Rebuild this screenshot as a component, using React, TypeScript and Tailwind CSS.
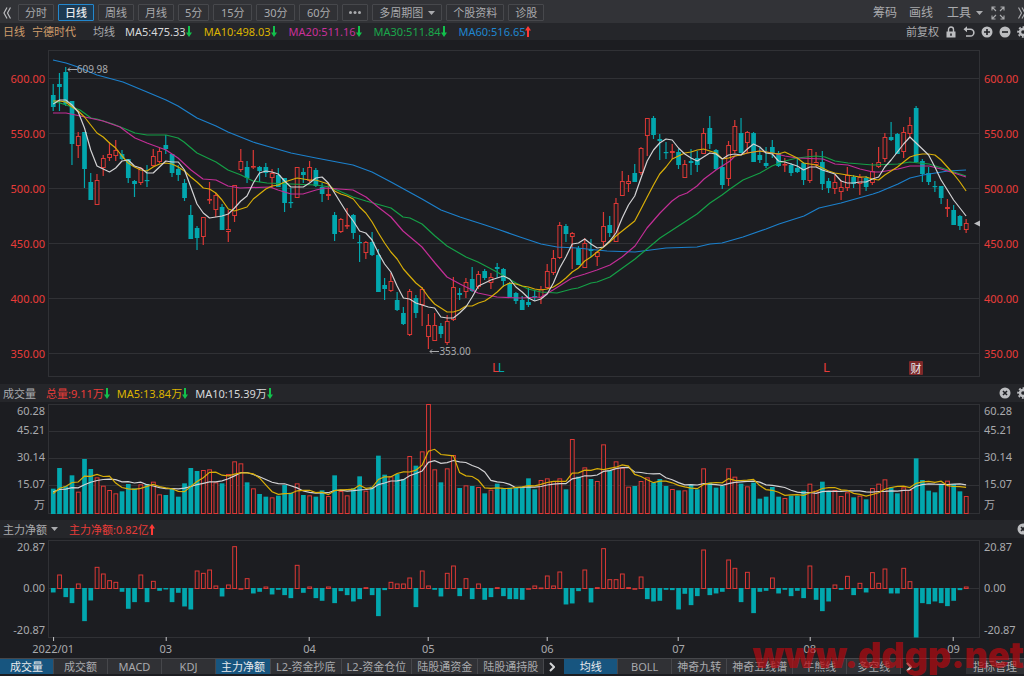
import React from "react";

const STEP = 6.253;
const FIRST = 5.2;
const PLOT_W = 932;
const PRICE_TOP = 50;
const xAt = (i: number) => FIRST + STEP * i;
const leftPct = (x: number) => ({ left: `${(x / PLOT_W) * 100}%` });

const RED = "#dc3835";
const TEAL = "#02a7ae";
const YELLOW = "#d8ae08";
const WHITE = "#d2d2d4";
const GRID = "#303135";

// direction, high, body top, body bottom, low
const CANDLES = `d 84 95 107 111|d 73 84 87 111|d 67 72 104 106|d 101 101 144 165|u 132 136 146 158|d 132 132 169 188|d 173 182 200 200|u 174 180 205 205|u 155 158 168 176|u 142 154 158 161|u 140 150 156 161|d 150 154 159 160|d 159 159 178 183|d 180 181 184 197|u 167 168 183 185|d 165 180 181 187|u 149 156 166 167|u 148 151 162 163|d 135 145 149 154|d 154 154 173 177|d 165 169 175 181|d 179 183 198 201|d 205 215 239 239|d 226 228 238 250|u 217 217 237 245|u 182 199 200 204|u 193 195 210 217|d 204 207 230 230|u 210 229 232 242|u 185 185 216 222|u 149 161 170 172|d 161 167 178 183|u 150 166 167 169|d 166 167 171 182|d 163 167 173 177|u 169 173 178 188|d 168 175 187 187|d 178 178 203 212|d 188 202 203 208|u 167 167 198 198|d 168 172 175 183|u 161 167 181 182|d 168 170 186 187|d 183 187 194 202|u 184 194 196 200|d 212 215 234 241|u 218 219 232 233|u 208 225 226 229|d 214 215 233 239|d 235 242 243 262|u 241 242 253 259|d 232 242 255 256|d 249 255 292 292|d 278 285 289 300|u 273 281 291 292|d 292 300 310 311|d 307 313 324 325|u 289 291 335 336|d 295 298 313 318|u 287 289 305 326|u 314 325 337 349|u 313 325 341 341|d 323 326 334 338|u 315 321 343 345|u 277 287 320 321|d 288 293 295 300|u 278 282 292 298|d 267 279 291 292|u 271 274 287 289|d 269 271 278 280|u 273 277 283 289|d 263 267 269 278|d 268 269 281 287|d 282 283 297 297|d 292 293 301 304|d 296 300 310 310|d 288 302 305 307|d 290 296 297 301|u 286 289 298 304|u 264 271 288 289|u 250 258 273 275|u 222 225 258 259|d 224 226 234 242|u 232 233 237 269|d 246 248 265 265|u 238 243 268 268|d 239 249 251 257|u 251 252 257 266|u 212 226 242 246|d 216 225 233 237|u 198 203 242 242|u 171 181 196 196|u 175 181 184 192|d 164 173 182 182|u 147 148 173 175|u 118 118 136 156|d 116 118 135 139|d 134 139 141 160|d 142 152 153 159|u 144 151 153 159|d 149 152 165 169|u 160 164 178 178|d 149 161 163 175|d 151 158 165 172|u 128 133 154 154|d 116 128 144 149|d 149 150 169 170|d 160 167 185 189|u 141 145 179 186|u 120 126 151 153|d 118 133 153 153|u 131 132 143 153|d 132 133 162 162|d 148 155 160 163|d 147 163 166 168|d 140 147 154 158|d 151 153 166 167|u 158 164 165 172|d 163 165 173 176|d 158 168 172 173|d 162 163 180 185|u 149 149 181 183|u 152 162 165 167|d 151 162 184 190|d 178 181 188 193|u 175 182 189 194|u 180 187 192 200|u 167 175 188 191|d 175 177 184 188|u 174 177 184 195|d 176 178 187 191|u 163 171 183 185|u 147 162 167 168|u 133 137 159 162|d 122 137 140 141|d 133 134 154 154|u 127 132 152 158|u 117 125 134 138|d 106 108 162 163|d 159 161 174 182|d 167 173 182 185|d 181 186 187 192|d 186 186 198 204|u 199 207 209 217|d 205 210 225 225|d 215 216 226 230|u 219 223 230 233`
  .split("|")
  .map((row) => {
    const [dir, ...v] = row.split(" ");
    const [high, top, bottom, low] = v.map(Number);
    return { up: dir === "u", high, top, bottom, low };
  });

const MA5 = [104, 100, 100, 105, 112, 128, 150, 166, 169, 172, 168, 161, 160, 166, 168, 173, 173, 167, 161, 162, 162, 170, 187, 204, 213, 218, 217, 216, 214, 208, 201, 196, 183, 173, 171, 172, 174, 181, 187, 187, 187, 183, 178, 177, 183, 193, 203, 213, 221, 231, 233, 240, 253, 264, 272, 286, 298, 299, 303, 305, 307, 308, 317, 318, 318, 313, 307, 297, 286, 283, 280, 278, 276, 279, 287, 292, 298, 301, 299, 294, 283, 268, 257, 244, 243, 239, 244, 248, 247, 241, 233, 218, 205, 196, 178, 161, 150, 143, 139, 140, 148, 154, 158, 161, 157, 153, 154, 159, 155, 154, 155, 149, 144, 147, 153, 154, 161, 162, 164, 166, 170, 167, 167, 170, 172, 174, 181, 183, 183, 182, 182, 179, 177, 167, 160, 152, 144, 137, 143, 149, 155, 167, 180, 190, 200, 208, 216];
const MA10 = [101, 101, 102, 107, 111, 117, 125, 133, 137, 143, 148, 156, 163, 167, 170, 171, 167, 164, 163, 164, 167, 171, 177, 182, 188, 189, 193, 200, 209, 211, 209, 207, 199, 194, 189, 186, 185, 182, 180, 178, 179, 180, 180, 182, 184, 191, 194, 196, 199, 207, 213, 222, 233, 243, 252, 259, 269, 276, 283, 288, 297, 304, 308, 312, 312, 310, 306, 306, 303, 301, 297, 292, 286, 283, 284, 286, 287, 289, 290, 289, 287, 283, 278, 272, 268, 261, 257, 252, 247, 242, 236, 231, 226, 221, 209, 197, 185, 174, 167, 159, 156, 153, 152, 150, 149, 151, 153, 159, 158, 156, 155, 153, 152, 151, 152, 153, 154, 152, 155, 158, 163, 164, 165, 168, 171, 173, 174, 175, 176, 177, 177, 179, 180, 175, 171, 167, 162, 157, 155, 154, 154, 155, 160, 167, 174, 182, 191];
const MA20 = "53,113 66,113 85,117 103,121 120,127 128,133 135,138 147,143 166,150 178,158 191,170 203,179 216,180 228,186 240,188 270,187 278,190 291,194 303,194 316,190 325,188 353,190 366,197 378,207 391,217 403,231 422,247 435,263 447,277 460,284 478,293 497,297 520,298 541,297 553,290 572,278 585,274 597,270 610,265 622,257 635,246 647,228 660,213 672,201 679,196 687,193 697,186 704,179 716,170 730,161 735,156 747,153 760,151 772,153 785,156 797,158 823,159 835,164 848,165 860,169 873,172 880,172 898,169 910,166 929,166 941,169 954,173 966,177";
const MA30 = "53,102 60,103 72,107 80,110 91,118 97,119 113,124 128,130 135,133 147,135 166,135 178,138 184,142 197,153 216,162 228,170 241,175 253,181 267,183 291,184 316,185 330,187 353,197 366,201 391,208 403,217 410,218 422,224 435,236 447,246 466,257 478,262 497,272 516,283 528,289 541,292 557,293 572,289 578,288 591,283 597,282 610,277 635,259 660,238 680,225 697,214 710,203 722,195 730,189 743,180 760,173 772,166 785,161 797,158 816,156 825,157 835,161 848,163 873,165 898,164 910,162 929,164 948,170 966,176";
const MA60 = "53,60 66,63 78,67 97,75 123,82 147,92 166,100 178,106 197,118 216,126 228,132 253,142 270,147 291,153 316,158 337,162 353,165 372,172 391,182 422,199 441,210 460,217 485,225 500,230 520,237 541,244 557,247 577,248 607,251 635,252 666,248 697,247 710,244 722,243 743,237 766,229 779,224 804,216 819,208 841,203 873,194 879,192 898,184 910,178 923,175 948,171 966,170";

// thirds of a unit measured down from the top of the volume panel
const VOLUME = [326, 264, 319, 286, 335, 237, 267, 292, 317, 330, 340, 334, 312, 325, 313, 312, 305, 343, 345, 327, 350, 310, 264, 273, 270, 268, 307, 310, 282, 244, 250, 307, 325, 342, 350, 352, 347, 315, 338, 310, 345, 346, 350, 331, 348, 286, 333, 346, 325, 289, 332, 320, 227, 284, 289, 282, 297, 228, 257, 214, 72, 268, 307, 265, 225, 324, 316, 318, 321, 340, 329, 311, 325, 323, 323, 320, 295, 328, 300, 295, 303, 295, 328, 177, 290, 262, 297, 303, 193, 271, 244, 263, 320, 318, 303, 292, 308, 297, 318, 327, 331, 331, 314, 328, 265, 308, 323, 318, 265, 290, 311, 319, 308, 356, 350, 321, 350, 354, 347, 347, 332, 311, 332, 305, 334, 330, 348, 337, 352, 347, 358, 324, 311, 298, 322, 340, 322, 330, 235, 300, 332, 337, 314, 302, 312, 334, 348].map((v) => (v - 72) / 3);
const EARLIER = [330, 330, 330, 330, 330, 343, 345, 345, 343].map((v) => (v - 72) / 3);

// net inflow, in thirds of a unit
const FLOW = [-11, 42, -25, -43, 15, -97, -35, 65, 45, 25, 20, -9, -60, -40, 42, -40, 23, -6, -2, -40, -12, -53, -62, 54, 47, 57, 9, -23, 12, 127, 1, 31, -14, -9, 6, -17, -3, -19, -28, 71, -12, 6, -28, -36, 6, -43, -7, -19, -38, -31, 4, -19, -82, -4, 20, 15, 15, 33, -55, 54, 9, -3, -23, 47, 69, -22, 31, -31, 15, -33, -25, 4, -22, -31, -31, -33, 1, 9, 3, 39, 9, 51, -47, -44, -7, 57, -41, 4, 121, 28, 28, 45, 4, 1, 36, -31, -38, -36, -3, -4, -62, -15, -49, -22, 117, -19, -14, -9, 87, 62, -40, 50, -73, -9, -6, 33, -14, -3, -22, -6, -28, 69, -33, -67, -38, 12, -3, 38, -19, 17, -11, 49, 17, 60, -14, -14, 62, 22, -146, -43, -46, -38, -43, -52, -36, -4, 6].map((v) => v / 3);

const MONTHS: [string, number][] = [["2022/01", 0], ["03", 18], ["04", 41], ["05", 60], ["06", 79], ["07", 100], ["08", 121], ["09", 144]];

const line = (ys: number[]) => ys.map((y, i) => `${xAt(i).toFixed(1)},${y.toFixed(1)}`).join(" ");
const average = (n: number) => {
  const all = [...EARLIER, ...VOLUME];
  return VOLUME.map((_, i) => all.slice(i + 10 - n, i + 10).reduce((a, b) => a + b, 0) / n);
};

function Bar({ x, y, h, up }: { x: number; y: number; h: number; up: boolean }) {
  return up ? (
    <rect x={x - 1.8} y={y + 0.5} width={3.8} height={Math.max(h - 1, 0.6)} fill="#1c1d21" stroke={RED} />
  ) : (
    <rect x={x - 2.3} y={y} width={4.7} height={Math.max(h, 1.2)} fill={TEAL} />
  );
}

function Plot({ height, rules, children }: { height: number; rules: number[]; children: React.ReactNode }) {
  return (
    <svg viewBox={`0 0 ${PLOT_W} ${height}`} height={height} preserveAspectRatio="none" className="block w-full" aria-hidden="true">
      {rules.map((y) => (
        <line key={y} x1="0" x2={PLOT_W} y1={y + 0.5} y2={y + 0.5} stroke={GRID} />
      ))}
      <rect x="0.5" y="0.5" width={PLOT_W - 1} height={height - 1} fill="none" stroke={GRID} />
      {children}
    </svg>
  );
}

function Trend({ up = false }: { up?: boolean }) {
  return (
    <svg width="6" height="11" viewBox="0 0 6 11" className={up ? "shrink-0 text-[#ff3a36]" : "shrink-0 rotate-180 text-[#12c04c]"} aria-hidden="true">
      <path d="M3 0 6 4.500H4V11H2V4.500H0Z" fill="currentColor" />
    </svg>
  );
}

function Stat({ text, color, up }: { text: string; color: string; up?: boolean }) {
  return (
    <span className={`flex items-center ${color}`}>
      {text}
      <Trend up={up} />
    </span>
  );
}

function Caret() {
  return (
    <svg width="7" height="4" viewBox="0 0 7 4" className="shrink-0" aria-hidden="true">
      <path d="M0 0H7L3.500 4Z" fill="currentColor" />
    </svg>
  );
}

function Gear() {
  return (
    <svg width="12" height="12" viewBox="0 0 12 12" className="shrink-0" aria-hidden="true">
      <g fill="none" stroke="currentColor">
        <circle cx="6" cy="6" r="3" strokeWidth="2.4" />
        <circle cx="6" cy="6" r="4.9" strokeWidth="1.8" strokeDasharray="1.95 1.9" strokeDashoffset="1" />
      </g>
    </svg>
  );
}

function Disc({ d }: { d: string }) {
  return (
    <svg width="12" height="12" viewBox="0 0 12 12" className="shrink-0" aria-hidden="true">
      <circle cx="6" cy="6" r="5.5" fill="currentColor" />
      <path d={d} stroke="#1f2024" strokeWidth="1.6" fill="none" />
    </svg>
  );
}

const CROSS = "M4 4 8 8M8 4 4 8";

function IconButton({ label, children }: { label: string; children: React.ReactNode }) {
  return (
    <button aria-label={label} className="flex shrink-0 items-center text-[#bcbdc0]">
      {children}
    </button>
  );
}

function AxisColumn({ labels, side, rows, className }: { labels: string[]; side: "left" | "right"; rows: string; className: string }) {
  return (
    <div className={`grid shrink-0 ${rows} items-center leading-none ${className} ${side === "left" ? "w-12 pr-[3px] text-right" : "w-11 pl-1 text-left"}`}>
      {labels.map((l) => (
        <span key={l}>{l}</span>
      ))}
    </div>
  );
}

function Panel({ labels, rows, tone, children }: { labels: string[]; rows: string; tone: string; children: React.ReactNode }) {
  return (
    <div className="flex items-start">
      <AxisColumn labels={labels} side="left" rows={rows} className={tone} />
      <div className="relative min-w-0 flex-1">{children}</div>
      <AxisColumn labels={labels} side="right" rows={rows} className={tone} />
    </div>
  );
}

function Callout({ index, y, text }: { index: number; y: string; text: string }) {
  return (
    <span className={`absolute ${y} ml-px flex items-center text-[10px] leading-3 text-[#a9aaad]`} style={leftPct(xAt(index))}>
      <svg width="10" height="5" viewBox="0 0 10 5" aria-hidden="true">
        <path d="M10 2.500H1M3 .5 1 2.500 3 4.500" stroke="currentColor" fill="none" />
      </svg>
      {text}
    </span>
  );
}

function Tab({ label, active }: { label: string; active?: boolean }) {
  return (
    <button
      className={`h-[15px] min-w-[54px] shrink-0 whitespace-nowrap border-r border-[#46474b] px-[5px] leading-none ${
        active ? "bg-[#17557f] text-[#e8eaed]" : "bg-[#303135] text-[#a9aaad]"
      }`}
    >
      {label}
    </button>
  );
}

function More() {
  return (
    <button aria-label="更多指标" className="flex h-[15px] w-4 shrink-0 items-center justify-center text-[#d5d6d8]">
      <svg width="6" height="10" viewBox="0 0 6 10" aria-hidden="true">
        <path d="M1 1 5 5 1 9" stroke="currentColor" strokeWidth="2" fill="none" />
      </svg>
    </button>
  );
}

function Chevrons({ flip }: { flip?: boolean }) {
  return (
    <svg width="8" height="12" viewBox="0 0 8 12" className={flip ? "shrink-0 rotate-180" : "shrink-0"} aria-hidden="true">
      <path d="M4 .5 1 6 4 11.500M7.500 .5 4.500 6 7.500 11.500" stroke="currentColor" strokeWidth="1.2" fill="none" />
    </svg>
  );
}

const PERIODS = ["分时", "日线", "周线", "月线", "5分", "15分", "30分", "60分"];
const BOX = "flex h-[17px] shrink-0 items-center justify-center whitespace-nowrap rounded-[1px] border px-[6px] leading-none";
const BOX_IDLE = "border-[#47484c] bg-[#303135] text-[#a9aaad]";

export default function App() {
  return (
    <main className="relative min-h-screen overflow-hidden bg-[#1c1d21] font-['Noto_Sans','Noto_Sans_CJK_SC',sans-serif] text-[11px] text-[#a9aaad]">
      <nav className="flex h-[23px] items-center gap-1 bg-[#323337] pt-[2px]">
        <button aria-label="收起" className="mr-[3px] pl-[3px] text-[#bcbdc0]">
          <Chevrons />
        </button>
        {PERIODS.map((p) => (
          <button
            key={p}
            className={`${BOX} ${p.length === 3 ? "min-w-[39px]" : ""} ${p === "日线" ? "border-[#2387cd] bg-[#1d3a52] font-medium text-[#e8eaed]" : BOX_IDLE}`}
          >
            {p}
          </button>
        ))}
        <button aria-label="更多周期" className={`${BOX} ${BOX_IDLE}`}>
          <svg width="12" height="3" viewBox="0 0 12 3" fill="currentColor" aria-hidden="true">
            <circle cx="1.5" cy="1.5" r="1.5" />
            <circle cx="6" cy="1.5" r="1.5" />
            <circle cx="10.5" cy="1.5" r="1.5" />
          </svg>
        </button>
        <button className={`${BOX} ${BOX_IDLE} gap-[5px]`}>
          多周期图
          <Caret />
        </button>
        <button className={`${BOX} ${BOX_IDLE}`}>个股资料</button>
        <button className={`${BOX} ${BOX_IDLE}`}>诊股</button>
        <div className="ml-auto -mr-[2px] flex items-center text-xs leading-none">
          <button className="mr-3">筹码</button>
          <button className="mr-[14px]">画线</button>
          <button className="mr-2 flex items-center gap-[5px]">
            工具
            <Caret />
          </button>
          <button aria-label="全屏" className="mr-[13px]">
            <svg width="14" height="14" viewBox="0 0 14 14" className="block" aria-hidden="true">
              <path d="M1 4.500V1H4.500M1 1 5 5M9.500 1H13V4.500M13 1 9 5M1 9.500V13H4.500M1 13 5 9M13 9.500V13H9.500M13 13 9 9" stroke="currentColor" strokeWidth="1.1" fill="none" />
            </svg>
          </button>
          <button aria-label="展开">
            <Chevrons flip />
          </button>
        </div>
      </nav>

      <header className="flex h-[17px] items-center bg-[#25262a] pl-[3px] leading-none whitespace-nowrap">
        <h1 className="flex gap-[7px] text-[#cf9d6c]">
          <span>日线</span>
          <span>宁德时代</span>
        </h1>
        <span className="mr-[10px] ml-[17px]">均线</span>
        <div className="flex gap-3">
          <Stat text="MA5:475.33" color="text-[#d8d9db]" />
          <Stat text="MA10:498.03" color="text-[#dcb400]" />
          <Stat text="MA20:511.16" color="text-[#c9309a]" />
          <Stat text="MA30:511.84" color="text-[#1aa84a]" />
          <Stat text="MA60:516.65" color="text-[#1f86d0]" up />
        </div>
        <div className="-mr-[5px] ml-auto flex items-center gap-1.5">
          <span>前复权</span>
          <IconButton label="锁定">
            <svg width="12" height="12" viewBox="0 0 12 12" aria-hidden="true">
              <path d="M3.500 6V3.500a2.500 2.500 0 0 1 5 0V6" stroke="currentColor" strokeWidth="1.4" fill="none" />
              <path d="M1.500 5.500h9V11.500h-9ZM5.200 7.500V9.800H6.800V7.500Z" fill="currentColor" fillRule="evenodd" />
            </svg>
          </IconButton>
          <IconButton label="撤销">
            <svg width="12" height="12" viewBox="0 0 12 12" aria-hidden="true">
              <path d="M4 .3V6.300L.5 3.300Z" fill="currentColor" />
              <path d="M3 3.300H7.500a3.200 3.200 0 0 1 0 6.700H3" stroke="currentColor" strokeWidth="1.6" fill="none" />
            </svg>
          </IconButton>
          <IconButton label="放大"><Disc d="M3 6H9M6 3V9" /></IconButton>
          <IconButton label="缩小"><Disc d="M3 6H9" /></IconButton>
          <IconButton label="设置"><Gear /></IconButton>
        </div>
      </header>

      <section aria-label="K线图" className="h-[344px] pt-[10px]">
        <Panel labels={["600.00", "550.00", "500.00", "450.00", "400.00", "350.00"]} rows="grid-rows-[repeat(6,55px)] pt-[1px]" tone="text-[#e93c39]">
          <Plot height={327} rules={[28, 83, 138, 193, 248, 303]}>
            <g transform={`translate(0 ${-PRICE_TOP})`}>
              {CANDLES.map((c, i) => (
                <g key={i}>
                  <path d={`M${xAt(i)} ${c.high}V${c.top}M${xAt(i)} ${c.bottom}V${c.low}`} stroke={c.up ? RED : TEAL} strokeWidth="1.2" />
                  <Bar x={xAt(i)} y={c.top} h={c.bottom - c.top} up={c.up} />
                </g>
              ))}
              <g fill="none" strokeWidth="1.2" strokeLinejoin="round">
                <polyline points={MA60} transform="translate(-48 0)" stroke="#1c80cc" />
                <polyline points={MA30} transform="translate(-48 0)" stroke="#15a047" />
                <polyline points={MA20} transform="translate(-48 0)" stroke="#c22e96" />
                <polyline points={line(MA10)} stroke={YELLOW} />
                <polyline points={line(MA5)} stroke={WHITE} />
              </g>
              <path d="M926 223.500 932 220.500V226.500Z" fill="#bcbdc0" />
            </g>
          </Plot>
          <Callout index={2} y="top-[13px]" text="609.98" />
          <Callout index={60} y="top-[295px]" text="353.00" />
          <span className="absolute top-[311px] flex text-[13px] leading-3 text-[#e93c39]" style={leftPct(444)}>
            L<span className="-ml-[1px] text-[#02a7ae]">L</span>
          </span>
          <span className="absolute top-[311px] text-[13px] leading-3 text-[#e93c39]" style={leftPct(775)}>L</span>
          <span className="absolute top-[311px] flex h-[14px] w-[14px] items-center justify-center rounded-[1px] bg-[#7d2829] leading-none text-[#e8eaed]" style={leftPct(861)}>
            财
          </span>
        </Panel>
      </section>

      <section aria-label="成交量">
        <header className="flex h-[18px] items-center bg-[#25262a] pl-[3px] leading-none whitespace-nowrap">
          <h2 className="mr-[10px]">成交量</h2>
          <div className="flex gap-[7px]">
            <Stat text="总量:9.11万" color="text-[#e93c39]" />
            <Stat text="MA5:13.84万" color="text-[#dcb400]" />
            <Stat text="MA10:15.39万" color="text-[#d8d9db]" />
          </div>
          <div className="-mr-[5px] ml-auto flex items-center gap-1.5">
            <IconButton label="关闭成交量"><Disc d={CROSS} /></IconButton>
            <IconButton label="成交量设置"><Gear /></IconButton>
          </div>
        </header>
        <div className="pt-[2px] pb-[6px]">
          <Panel labels={["60.28", "45.21", "30.14", "15.07", "万"]} rows="grid-rows-[12px_27px_27px_27px_15px]" tone="text-[#a9aaad]">
            <Plot height={110} rules={[27, 54, 81]}>
              {VOLUME.map((v, i) => (
                <Bar key={i} x={xAt(i)} y={v} h={110 - v} up={CANDLES[i].up} />
              ))}
              <polyline points={line(average(10))} fill="none" stroke={WHITE} strokeWidth="1.2" />
              <polyline points={line(average(5))} fill="none" stroke={YELLOW} strokeWidth="1.2" />
            </Plot>
          </Panel>
        </div>
      </section>

      <section aria-label="主力净额">
        <header className="flex h-[18px] items-center bg-[#25262a] pl-[3px] leading-none whitespace-nowrap">
          <button className="mr-[11px] flex items-center gap-1">
            主力净额
            <Caret />
          </button>
          <Stat text="主力净额:0.82亿" color="text-[#e93c39]" up />
          <div className="-mr-[5px] ml-auto flex">
            <IconButton label="关闭主力净额"><Disc d={CROSS} /></IconButton>
          </div>
        </header>
        <div className="pt-[2px]">
          <Panel labels={["20.87", "0.00", "-20.87"]} rows="grid-rows-[12px_71px_12px]" tone="text-[#a9aaad]">
            <Plot height={98} rules={[48]}>
              {FLOW.map((v, i) => (
                <Bar key={i} x={xAt(i)} y={v > 0 ? 49 - v - 0.5 : 48} h={v > 0 ? v + 0.5 : -v + 0.8} up={v > 0} />
              ))}
            </Plot>
          </Panel>
        </div>
        <div className="relative mr-11 ml-12 h-5">
          {MONTHS.map(([m, i]) => (
            <span key={m} className="absolute -top-[1px] flex -translate-x-1/2 flex-col items-center gap-[2px] leading-[12px]" style={leftPct(xAt(i))}>
              <span className="h-1 w-px bg-[#c5c6c8]" />
              {m}
            </span>
          ))}
        </div>
      </section>

      <footer className="flex border-t border-[#46474b] bg-[#1f2024]">
        <Tab label="成交量" active />
        <Tab label="成交额" />
        <Tab label="MACD" />
        <Tab label="KDJ" />
        <Tab label="主力净额" active />
        <Tab label="L2-资金抄底" />
        <Tab label="L2-资金仓位" />
        <Tab label="陆股通资金" />
        <Tab label="陆股通持股" />
        <More />
        <span className="w-1 shrink-0" />
        <Tab label="均线" active />
        <Tab label="BOLL" />
        <Tab label="神奇九转" />
        <Tab label="神奇五线谱" />
        <Tab label="牛熊线" />
        <Tab label="多空线" />
        <More />
        <button className="ml-auto h-[15px] w-[58px] shrink-0 bg-[#303135] leading-none">指标管理</button>
      </footer>

      <span className="pointer-events-none absolute right-0 bottom-[5px] font-['Inter'] text-[36px] leading-8 font-black text-[#b80a10]/70">
        www.ddgp.net
      </span>
    </main>
  );
}
